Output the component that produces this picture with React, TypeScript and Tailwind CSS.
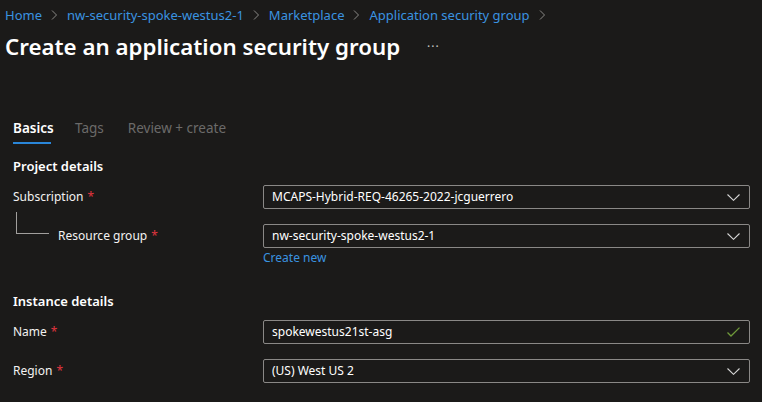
import React from "react";

const font = { fontFamily: '"Noto Sans", "Open Sans", sans-serif' };

function Chevron() {
  return (
    <svg width="13" height="7" viewBox="0 0 13 7" className="shrink-0">
      <path d="M0.5 0.5 L6.5 6.3 L12.5 0.5" fill="none" stroke="#d6d6d6" strokeWidth="1.1" />
    </svg>
  );
}

function Check() {
  return (
    <svg width="13" height="10" viewBox="0 0 13 10" className="shrink-0">
      <path d="M0.5 5.5 L4 9 L12.5 0.6" fill="none" stroke="#6f9a3a" strokeWidth="1.3" />
    </svg>
  );
}

function Sep() {
  return (
    <svg width="7" height="10" viewBox="0 0 7 10" className="mx-[9px] shrink-0">
      <path d="M1 0.5 L5.5 5 L1 9.5" fill="none" stroke="#8a8886" strokeWidth="1" />
    </svg>
  );
}

function Field({ value, icon }: { value: string; icon: "chev" | "check" }) {
  return (
    <div className="flex h-[24px] w-[487px] items-center justify-between rounded-[2px] border border-[#8a8886] pl-[8px] pr-[9px]">
      <span className="text-[12px] leading-none text-white">{value}</span>
      {icon === "chev" ? <Chevron /> : <Check />}
    </div>
  );
}

function Star() {
  return <span className="ml-[4px] text-[#e0353f]">*</span>;
}

export default function App() {
  return (
    <div className="h-[402px] w-[762px] overflow-hidden bg-[#1b1a19] text-white" style={font}>
      <div className="flex items-center pl-[5px] pt-[5px] text-[13px] leading-[20px] text-[#3a93e0]">
        <span>Home</span>
        <Sep />
        <span>nw-security-spoke-westus2-1</span>
        <Sep />
        <span>Marketplace</span>
        <Sep />
        <span>Application security group</span>
        <Sep />
      </div>
      <div className="mt-[6px] flex h-[32px] items-center pl-[5px]">
        <h1 className="text-[22.3px] font-semibold leading-[32px] text-white">Create an application security group</h1>
        <span className="ml-[27px] text-[12px] tracking-[1px] text-[#c8c6c4]">···</span>
      </div>

      <div className="mt-[55px] flex pl-[13px] text-[13.5px] leading-[20px]">
        <div className="flex w-[38px] flex-col">
          <span className="font-semibold text-white">Basics</span>
          <div className="mt-[4px] h-[2px] bg-[#2a86d8]" />
        </div>
        <span className="ml-[24px] text-[#6b6a69]">Tags</span>
        <span className="ml-[24px] text-[#6b6a69]">Review + create</span>
      </div>

      <div className="mt-[12px] pl-[13px] text-[13px] font-semibold leading-[20px]">Project details</div>

      <div className="mt-[9px] flex items-center">
        <div className="flex h-[24px] w-[263px] items-center pl-[13px] text-[12px] text-[#f3f2f1]">
          Subscription<Star />
        </div>
        <Field value="MCAPS-Hybrid-REQ-46265-2022-jcguerrero" icon="chev" />
      </div>

      <div className="mt-[15px] flex items-center">
        <div className="relative flex h-[24px] w-[263px] items-center pl-[58px] text-[12px] text-[#f3f2f1]">
          <div className="absolute left-[16px] top-[-12px] h-[22px] w-[33px] border-b border-l border-[#a19f9d]" />
          Resource group<Star />
        </div>
        <Field value="nw-security-spoke-westus2-1" icon="chev" />
      </div>
      <div className="mt-[1px] pl-[263px] text-[12px] leading-[18px] text-[#3a93e0]">Create new</div>

      <div className="mt-[24px] pl-[13px] text-[13px] font-semibold leading-[20px]">Instance details</div>

      <div className="mt-[9px] flex items-center">
        <div className="flex h-[24px] w-[263px] items-center pl-[13px] text-[12px] text-[#f3f2f1]">
          Name<Star />
        </div>
        <Field value="spokewestus21st-asg" icon="check" />
      </div>

      <div className="mt-[15px] flex items-center">
        <div className="flex h-[24px] w-[263px] items-center pl-[13px] text-[12px] text-[#f3f2f1]">
          Region<Star />
        </div>
        <Field value="(US) West US 2" icon="chev" />
      </div>
    </div>
  );
}
